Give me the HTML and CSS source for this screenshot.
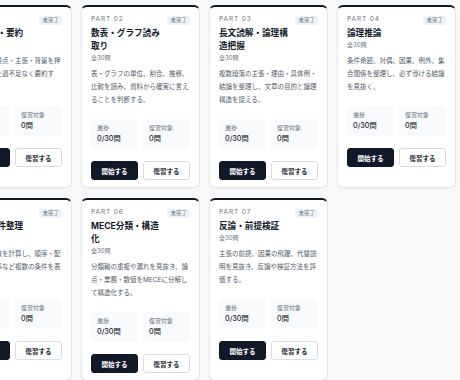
FILE: index.html
```html
<!DOCTYPE html>
<html lang="ja">

<head>
    <meta charset="UTF-8">
    <meta name="viewport" content="width=device-width, initial-scale=1.0">
    <title>パート一覧</title>
    <link rel="stylesheet" href="styles.css">
</head>

<body>

    <div class="board">
        <div class="part">
            <div class="part-head">
                <div class="part-titles">
                    <div class="part-no">PART 01</div>
                    <h2 class="part-title">文章理解・要約</h2>
                    <div class="part-count">全30問</div>
                </div>
                <span class="badge">未完了</span>
            </div>
            <p class="part-desc">段落ごとの要点・主張・背景を押さえ、論旨を過不足なく要約する。</p>
            <div class="stats">
                <div class="stat"><span>進捗</span><strong>0/30問</strong></div>
                <div class="stat"><span>復習対象</span><strong>0問</strong></div>
            </div>
            <div class="actions">
                <button class="btn btn-start">開始する</button>
                <button class="btn">復習する</button>
            </div>
        </div>

        <div class="part">
            <div class="part-head">
                <div class="part-titles">
                    <div class="part-no">PART 02</div>
                    <h2 class="part-title">数表・グラフ読み取り</h2>
                    <div class="part-count">全30問</div>
                </div>
                <span class="badge">未完了</span>
            </div>
            <p class="part-desc">表・グラフの単位、割合、推移、比較を読み、資料から確実に言えることを判断する。</p>
            <div class="stats">
                <div class="stat"><span>進捗</span><strong>0/30問</strong></div>
                <div class="stat"><span>復習対象</span><strong>0問</strong></div>
            </div>
            <div class="actions">
                <button class="btn btn-start">開始する</button>
                <button class="btn">復習する</button>
            </div>
        </div>

        <div class="part">
            <div class="part-head">
                <div class="part-titles">
                    <div class="part-no">PART 03</div>
                    <h2 class="part-title">長文読解・論理構造把握</h2>
                    <div class="part-count">全30問</div>
                </div>
                <span class="badge">未完了</span>
            </div>
            <p class="part-desc">複数段落の主張・理由・具体例・結論を整理し、文章の目的と論理構造を捉える。</p>
            <div class="stats">
                <div class="stat"><span>進捗</span><strong>0/30問</strong></div>
                <div class="stat"><span>復習対象</span><strong>0問</strong></div>
            </div>
            <div class="actions">
                <button class="btn btn-start">開始する</button>
                <button class="btn">復習する</button>
            </div>
        </div>

        <div class="part">
            <div class="part-head">
                <div class="part-titles">
                    <div class="part-no">PART 04</div>
                    <h2 class="part-title">論理推論</h2>
                    <div class="part-count">全30問</div>
                </div>
                <span class="badge">未完了</span>
            </div>
            <p class="part-desc">条件命題、対偶、因果、例外、集合関係を整理し、必ず導ける結論を見抜く。</p>
            <div class="stats">
                <div class="stat"><span>進捗</span><strong>0/30問</strong></div>
                <div class="stat"><span>復習対象</span><strong>0問</strong></div>
            </div>
            <div class="actions">
                <button class="btn btn-start">開始する</button>
                <button class="btn">復習する</button>
            </div>
        </div>

        <div class="part">
            <div class="part-head">
                <div class="part-titles">
                    <div class="part-no">PART 05</div>
                    <h2 class="part-title">順序・条件整理</h2>
                    <div class="part-count">全30問</div>
                </div>
                <span class="badge">未完了</span>
            </div>
            <p class="part-desc">組み合わせ数を計算し、順序・配置・対応関係など複数の条件を表で整理する。</p>
            <div class="stats">
                <div class="stat"><span>進捗</span><strong>0/30問</strong></div>
                <div class="stat"><span>復習対象</span><strong>0問</strong></div>
            </div>
            <div class="actions">
                <button class="btn btn-start">開始する</button>
                <button class="btn">復習する</button>
            </div>
        </div>

        <div class="part">
            <div class="part-head">
                <div class="part-titles">
                    <div class="part-no">PART 06</div>
                    <h2 class="part-title">MECE分類・構造化</h2>
                    <div class="part-count">全30問</div>
                </div>
                <span class="badge">未完了</span>
            </div>
            <p class="part-desc">分類軸の重複や漏れを見抜き、論点・業務・数値をMECEに分解して構造化する。</p>
            <div class="stats">
                <div class="stat"><span>進捗</span><strong>0/30問</strong></div>
                <div class="stat"><span>復習対象</span><strong>0問</strong></div>
            </div>
            <div class="actions">
                <button class="btn btn-start">開始する</button>
                <button class="btn">復習する</button>
            </div>
        </div>

        <div class="part">
            <div class="part-head">
                <div class="part-titles">
                    <div class="part-no">PART 07</div>
                    <h2 class="part-title">反論・前提検証</h2>
                    <div class="part-count">全30問</div>
                </div>
                <span class="badge">未完了</span>
            </div>
            <p class="part-desc">主張の前提、因果の飛躍、代替説明を見抜き、反論や検証方法を評価する。</p>
            <div class="stats">
                <div class="stat"><span>進捗</span><strong>0/30問</strong></div>
                <div class="stat"><span>復習対象</span><strong>0問</strong></div>
            </div>
            <div class="actions">
                <button class="btn btn-start">開始する</button>
                <button class="btn">復習する</button>
            </div>
        </div>
    </div>

</body>

</html>
```

FILE: styles.css
```css
html,
body {
    box-sizing: border-box;
    margin: 0;
    padding: 0;
    background: #f7f8fa;
    font-family: Inter, "Noto Sans CJK JP", sans-serif;
    color: #111827;
    overflow: hidden;
}

*,
*:before,
*:after {
    box-sizing: inherit;
}

.board{
    display: grid;
    grid-template-columns: repeat(4, 119px);
    gap: 10px 9px;
    padding-top: 5px;
    margin-left: -47px;
}

.part{
    background: #fff;
    border: 1px solid #e5e7eb;
    border-top: 2px solid #111827;
    border-radius: 6px;
    padding: 8px 9px 7px;
    box-shadow: 0 1px 2px rgba(15, 23, 42, 0.04);
}

.part-head{
    display: flex;
    align-items: flex-start;
    justify-content: space-between;
    gap: 4px;
}
.part-titles{
    flex: 1;
    min-width: 0;
}
.part-no{
    font-size: 6.5px;
    line-height: 9px;
    letter-spacing: 0.9px;
    color: #6b7280;
}
.part-title{
    margin: 3px 0 0;
    font-size: 8.6px;
    line-height: 13px;
    font-weight: 700;
    color: #111827;
}
.part-count{
    font-size: 6px;
    line-height: 9px;
    color: #6b7280;
}
.badge{
    flex: none;
    margin-top: 1px;
    padding: 1px 3px;
    font-size: 5.5px;
    line-height: 7px;
    border-radius: 3px;
    background: #eef1f6;
    color: #64748b;
}

.part-desc{
    margin: 6px 0 0;
    font-size: 6.5px;
    line-height: 13px;
    color: #525b68;
}

.stats{
    display: grid;
    grid-template-columns: 1fr 1fr;
    gap: 5px;
    margin-top: 12px;
}
.stat{
    background: #f8fafc;
    border-radius: 4px;
    padding: 5px 6px;
}
.stat span{
    display: block;
    font-size: 6px;
    line-height: 8px;
    color: #6b7280;
}
.stat strong{
    display: block;
    margin-top: 2px;
    font-size: 7.2px;
    line-height: 10px;
    font-weight: 500;
    color: #1f2937;
}

.actions{
    display: grid;
    grid-template-columns: 1fr 1fr;
    gap: 5px;
    margin-top: 12px;
}
.btn{
    height: 19px;
    padding: 0;
    font-family: inherit;
    font-size: 6.5px;
    font-weight: 700;
    border: 1px solid #d9dde3;
    border-radius: 3px;
    background: #fff;
    color: #1f2937;
}
.btn-start{
    background: #111827;
    border-color: #111827;
    color: #fff;
}
```
